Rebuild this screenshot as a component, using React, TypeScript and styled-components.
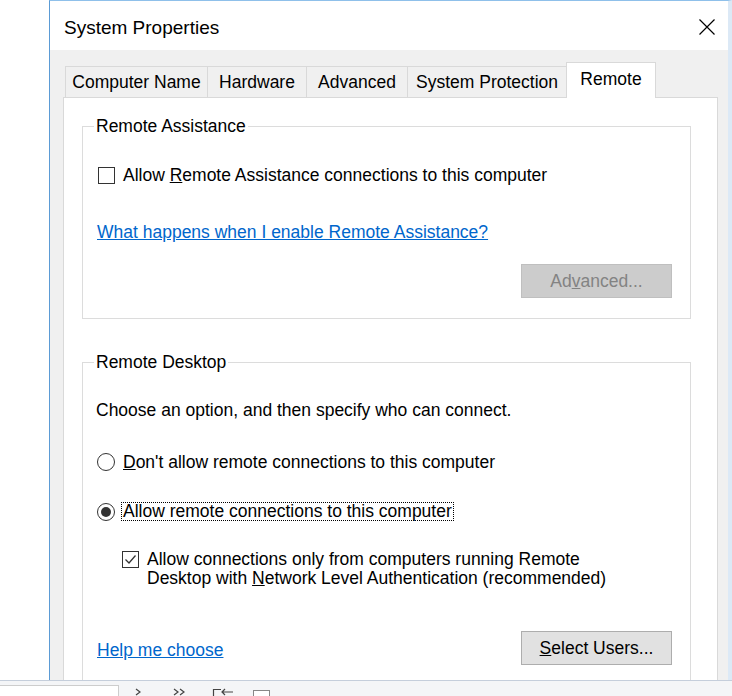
import styled, { createGlobalStyle } from "styled-components";

const GlobalStyle = createGlobalStyle`
  html, body {
    margin: 0;
    padding: 0;
    background: #ffffff;
  }
  body {
    font-family: "Liberation Sans", Arial, sans-serif;
    color: #000;
    overflow: hidden;
  }
`;

const Page = styled.div`
  width: 732px;
  height: 696px;
  display: flex;
  flex-direction: column;
  overflow: hidden;
`;

const Stage = styled.div`
  height: 680px;
  flex: none;
  display: flex;
  padding-left: 49px;
  overflow: hidden;
`;

const Dialog = styled.div`
  width: 683px;
  flex: none;
  box-sizing: border-box;
  border-top: 1px solid #8fc0ea;
  border-left: 1px solid #5b9bd5;
  border-right: 4px solid #dce9f6;
  background: #f0f0f0;
  display: flex;
  flex-direction: column;
`;

const TitleBar = styled.div`
  height: 49px;
  flex: none;
  background: #ffffff;
  display: flex;
  align-items: center;
  justify-content: space-between;
  padding: 0 12px 0 14px;
`;

const Title = styled.span`
  font-size: 19px;
  color: #000;
  margin-top: 4px;
`;

const CloseButton = styled.div`
  width: 18px;
  height: 18px;
  display: flex;
  margin-top: 2px;
`;

const Body = styled.div`
  padding: 12px 10px 0 13px;
`;

const TabRow = styled.div`
  height: 35px;
  display: flex;
  align-items: flex-end;
  padding-left: 2px;
`;

const Tab = styled.div<{ $w: number; $active?: boolean }>`
  width: ${({ $w }) => $w}px;
  height: ${({ $active }) => ($active ? 36 : 31)}px;
  box-sizing: border-box;
  margin-left: -1px;
  margin-bottom: ${({ $active }) => ($active ? -1 : 0)}px;
  border: 1px solid #d9d9d9;
  border-bottom: none;
  background: ${({ $active }) => ($active ? "#ffffff" : "#f0f0f0")};
  position: relative;
  z-index: ${({ $active }) => ($active ? 1 : 0)};
  display: flex;
  align-items: center;
  justify-content: center;
  font-size: 17.5px;
  padding-bottom: ${({ $active }) => ($active ? 2 : 0)}px;
  white-space: nowrap;

  &:first-child {
    margin-left: 0;
  }
`;

const Panel = styled.div`
  height: 620px;
  border: 1px solid #d9d9d9;
  background: #ffffff;
  padding: 18px 0 0 18px;
`;

const GroupBox = styled.fieldset<{ $gap?: number }>`
  width: 609px;
  box-sizing: border-box;
  margin: ${({ $gap }) => $gap ?? 0}px 0 0 0;
  padding: 0 18px 20px 15px;
  border: 1px solid #dcdcdc;
  min-width: 0;
  display: flex;
  flex-direction: column;
`;

const Legend = styled.legend`
  padding: 0 2px;
  margin-left: -4px;
  font-size: 17.5px;
  line-height: 20px;
`;

const Row = styled.div<{ $top: number; $indent?: number }>`
  display: flex;
  align-items: center;
  margin-top: ${({ $top }) => $top}px;
  padding-left: ${({ $indent }) => $indent ?? 0}px;
  font-size: 17.5px;
  line-height: 20px;
  white-space: nowrap;
`;

const TopRow = styled(Row)`
  align-items: flex-start;
  line-height: 19px;
`;

const Text = styled.div<{ $top: number }>`
  margin-top: ${({ $top }) => $top}px;
  margin-left: -2px;
  font-size: 17.5px;
  line-height: 20px;
  white-space: nowrap;
`;

const LinkText = styled.a<{ $top?: number }>`
  display: block;
  margin-top: ${({ $top }) => $top ?? 0}px;
  margin-left: -1px;
  font-size: 17.5px;
  line-height: 20px;
  color: #0066cc;
  text-decoration: underline;
  white-space: nowrap;
  cursor: pointer;
`;

const CheckBox = styled.span<{ $top?: number }>`
  width: 17px;
  height: 17px;
  box-sizing: border-box;
  flex: none;
  border: 1px solid #333333;
  background: #ffffff;
  margin-right: 8px;
  margin-top: ${({ $top }) => $top ?? 0}px;
  display: flex;
  align-items: center;
  justify-content: center;
`;

const Radio = styled.span<{ $checked?: boolean }>`
  width: 18px;
  height: 18px;
  box-sizing: border-box;
  flex: none;
  margin-left: -1px;
  border: 1px solid #333333;
  border-radius: 50%;
  background: #ffffff;
  display: flex;
  align-items: center;
  justify-content: center;

  &::after {
    content: "";
    width: 10px;
    height: 10px;
    border-radius: 50%;
    background: ${({ $checked }) => ($checked ? "#333333" : "transparent")};
  }
`;

const RadioLabel = styled.span<{ $focused?: boolean }>`
  margin-left: ${({ $focused }) => ($focused ? 6 : 8)}px;
  padding: 0 ${({ $focused }) => ($focused ? 1 : 0)}px;
  border: ${({ $focused }) => ($focused ? "1px dotted #000" : "none")};
  line-height: ${({ $focused }) => ($focused ? 17 : 20)}px;
`;

const ButtonRow = styled.div<{ $top: number; $spread?: boolean }>`
  display: flex;
  align-items: center;
  justify-content: ${({ $spread }) => ($spread ? "space-between" : "flex-end")};
  margin-top: ${({ $top }) => $top}px;
`;

const Button = styled.button<{ $disabled?: boolean }>`
  width: 151px;
  height: 34px;
  box-sizing: border-box;
  border: 1px solid ${({ $disabled }) => ($disabled ? "#bfbfbf" : "#adadad")};
  background: ${({ $disabled }) => ($disabled ? "#cccccc" : "#e1e1e1")};
  color: ${({ $disabled }) => ($disabled ? "#838383" : "#000000")};
  font-family: "Liberation Sans", Arial, sans-serif;
  font-size: 17.5px;
  padding: 0;
`;

const HelpLink = styled(LinkText)`
  margin-top: 4px;
`;

const BottomBar = styled.div`
  height: 15px;
  flex: none;
  border-top: 1px solid #c5cedb;
  background: #f4f5f7;
  display: flex;
  align-items: flex-start;
  overflow: hidden;
`;

const SearchBox = styled.div`
  width: 119px;
  height: 20px;
  flex: none;
  box-sizing: border-box;
  margin-top: 4px;
  border: 1px solid #cdcdcd;
  border-left: none;
  background: #ffffff;
`;

const BarIcon = styled.svg<{ $left: number }>`
  flex: none;
  margin-left: ${({ $left }) => $left}px;
`;

const CloseIcon = () => (
  <svg width="18" height="18" viewBox="0 0 18 18">
    <path d="M1.5 1.5 L16.5 16.5 M16.5 1.5 L1.5 16.5" stroke="#000" strokeWidth="1.2" fill="none" />
  </svg>
);

const CheckMark = () => (
  <svg width="13" height="13" viewBox="0 0 13 13">
    <path d="M1.5 6.5 L5 10 L11.5 2.5" stroke="#333" strokeWidth="1.3" fill="none" />
  </svg>
);

const tabs = [
  { name: "Computer Name", w: 143 },
  { name: "Hardware", w: 100 },
  { name: "Advanced", w: 102 },
  { name: "System Protection", w: 160 },
  { name: "Remote", w: 90, active: true },
];

export default function App() {
  return (
    <Page>
      <GlobalStyle />
      <Stage>
        <Dialog>
          <TitleBar>
            <Title>System Properties</Title>
            <CloseButton>
              <CloseIcon />
            </CloseButton>
          </TitleBar>

          <Body>
            <TabRow>
              {tabs.map((t) => (
                <Tab key={t.name} $w={t.w} $active={t.active}>
                  {t.name}
                </Tab>
              ))}
            </TabRow>

            <Panel>
              {/* Remote Assistance */}
              <GroupBox>
                <Legend>Remote Assistance</Legend>
                <Row $top={29}>
                  <CheckBox />
                  <span>
                    Allow <u>R</u>emote Assistance connections to this computer
                  </span>
                </Row>
                <LinkText $top={37}>What happens when I enable Remote Assistance?</LinkText>
                <ButtonRow $top={22}>
                  <Button $disabled>
                    Ad<u>v</u>anced...
                  </Button>
                </ButtonRow>
              </GroupBox>

              {/* Remote Desktop */}
              <GroupBox $gap={33}>
                <Legend>Remote Desktop</Legend>
                <Text $top={28}>Choose an option, and then specify who can connect.</Text>
                <Row $top={32}>
                  <Radio />
                  <RadioLabel>
                    <u>D</u>on't allow remote connections to this computer
                  </RadioLabel>
                </Row>
                <Row $top={30}>
                  <Radio $checked />
                  <RadioLabel $focused>Allow remote connections to this computer</RadioLabel>
                </Row>
                <TopRow $top={29} $indent={24}>
                  <CheckBox $top={1}>
                    <CheckMark />
                  </CheckBox>
                  <span>
                    Allow connections only from computers running Remote
                    <br />
                    Desktop with <u>N</u>etwork Level Authentication (recommended)
                  </span>
                </TopRow>
                <ButtonRow $top={43} $spread>
                  <HelpLink>Help me choose</HelpLink>
                  <Button>
                    <u>S</u>elect Users...
                  </Button>
                </ButtonRow>
              </GroupBox>
            </Panel>
          </Body>
        </Dialog>
      </Stage>

      <BottomBar>
        <SearchBox />
        <BarIcon $left={16} width="6" height="15" viewBox="0 0 6 15">
          <path d="M1 8 L5 11 L1 14" stroke="#444" strokeWidth="1.2" fill="none" />
        </BarIcon>
        <BarIcon $left={32} width="13" height="15" viewBox="0 0 13 15">
          <path d="M1 8 L5 11 L1 14 M7 8 L11 11 L7 14" stroke="#444" strokeWidth="1.2" fill="none" />
        </BarIcon>
        <BarIcon $left={26} width="22" height="15" viewBox="0 0 22 15">
          <path d="M1.5 15 L1.5 8.5 L9 8.5 M10 11 L21 11 M13 8 L10 11 L13 14" stroke="#444" strokeWidth="1.2" fill="none" />
        </BarIcon>
        <BarIcon $left={19} width="18" height="15" viewBox="0 0 18 15">
          <rect x="0.5" y="9.5" width="16" height="16" stroke="#888" fill="#fff" />
        </BarIcon>
      </BottomBar>
    </Page>
  );
}
